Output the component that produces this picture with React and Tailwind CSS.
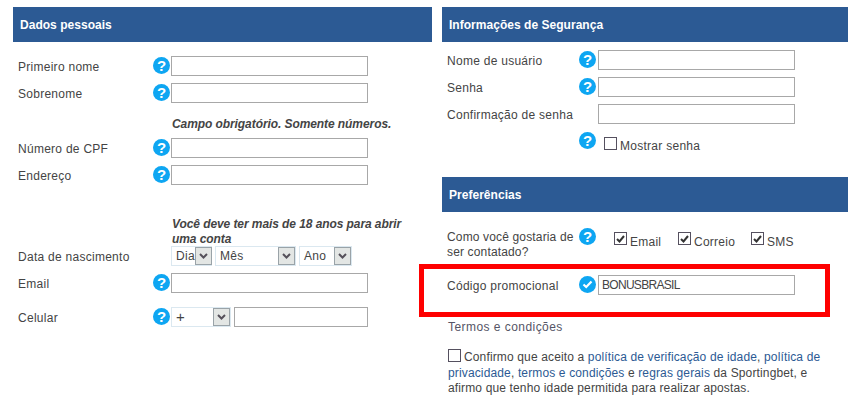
function Help({ check }) {
  return (
    <span className="flex h-[17px] w-[17px] shrink-0 items-center justify-center rounded-full bg-[#0ea6f2] text-[15px] font-bold leading-none text-white">
      {check ? (
        <svg width="11" height="9" viewBox="0 0 11 9" fill="none">
          <path d="M1.5 4.5 L4.2 7 L9.5 1.5" stroke="white" strokeWidth="2.2" />
        </svg>
      ) : (
        "?"
      )}
    </span>
  );
}

function Input({ className = "w-[197px]", value }) {
  return (
    <div className={`h-5 shrink-0 border border-[#a8a8a8] bg-white pl-[3px] text-[12px] leading-[19px] tracking-[-0.7px] text-[#444] ${className}`}>
      {value}
    </div>
  );
}

function Arrow() {
  return (
    <span className="flex h-[18px] w-[17px] shrink-0 items-center justify-center border border-[#9aa3a8] bg-[#e3e6e4]">
      <svg width="9" height="6" viewBox="0 0 9 6" fill="none">
        <path d="M1 1 L4.5 4.5 L8 1" stroke="#55505a" strokeWidth="2" />
      </svg>
    </span>
  );
}

function Select({ label, className, textClass = "" }) {
  return (
    <div className={`flex h-5 shrink-0 items-center justify-between border border-[#dbe8f0] bg-white pl-[4px] text-[12px] tracking-[0.3px] text-[#444] ${className}`}>
      <span className={textClass}>{label}</span>
      <Arrow />
    </div>
  );
}

function Box({ checked, className = "" }) {
  return (
    <span className={`flex h-[13px] w-[13px] shrink-0 items-center justify-center border border-[#55505f] bg-white ${className}`}>
      {checked && (
        <svg width="9" height="8" viewBox="0 0 9 8" fill="none">
          <path d="M1 4 L3.5 6.5 L8 1" stroke="#333" strokeWidth="2" />
        </svg>
      )}
    </span>
  );
}

function Row({ label, labelW, gap, mt, help = true, check, value, children }) {
  return (
    <div className={`flex h-5 items-start ${mt}`}>
      <div className={`shrink-0 pl-[5px] text-[12px] leading-[22px] tracking-[0.27px] text-[#444] ${labelW}`}>{label}</div>
      <div className={`flex shrink-0 pt-px ${gap}`}>
        {help ? <Help check={check} /> : <span className="h-[17px] w-[17px]" />}
      </div>
      {children || <Input value={value} />}
    </div>
  );
}

function Header({ children, className = "" }) {
  return (
    <div className={`flex h-[35px] items-center bg-[#2c5a94] pl-[7px] text-[12px] font-bold tracking-[0.03px] text-white ${className}`}>
      {children}
    </div>
  );
}

function Note({ children, className = "" }) {
  return (
    <div className={`pl-[159px] pr-[20px] text-[12px] font-bold italic leading-[15px] tracking-[-0.08px] text-[#444] ${className}`}>{children}</div>
  );
}

function Link({ children }) {
  return <span className="text-[#2c5a94]">{children}</span>;
}

export default function App() {
  const L = { labelW: "w-[140px]", gap: "mr-px" };
  const R = { labelW: "w-[137px]", gap: "mr-[2px]" };
  return (
    <div className="relative flex h-[405px] w-[856px] overflow-hidden bg-white pl-[13px] pt-[7px] font-['Liberation_Sans',Arial,sans-serif]">
      <section className="w-[419px] shrink-0">
        <Header>Dados pessoais</Header>
        <Row {...L} mt="mt-[14px]" label="Primeiro nome" />
        <Row {...L} mt="mt-[7px]" label="Sobrenome" />
        <Note className="mt-[14px]">Campo obrigatório. Somente números.</Note>
        <Row {...L} mt="mt-[6px]" label="Número de CPF" />
        <Row {...L} mt="mt-[7px]" label="Endereço" />
        <Note className="mt-[32px]">Você deve ter mais de 18 anos para abrir uma conta</Note>
        <Row {...L} mt="-mt-[1px]" help={false} label="Data de nascimento">
          <div className="flex gap-[3px]">
            <Select label="Dia" className="w-[41px]" />
            <Select label="Mês" className="w-[81px]" />
            <Select label="Ano" className="w-[53px]" />
          </div>
        </Row>
        <Row {...L} mt="mt-[7px]" label="Email" />
        <Row {...L} mt="mt-[14px]" label="Celular">
          <div className="flex gap-[3px]">
            <Select label="+" className="w-[60px]" textClass="text-[15px]" />
            <Input className="w-[134px]" />
          </div>
        </Row>
      </section>

      <section className="ml-[10px] w-[406px] shrink-0">
        <Header>Informações de Segurança</Header>
        <Row {...R} mt="mt-[8px]" label="Nome de usuário" />
        <Row {...R} mt="mt-[7px]" label="Senha" />
        <Row {...R} mt="mt-[7px]" help={false} label="Confirmação de senha" />
        <div className="mt-[8px] flex h-[35px] items-start pl-[137px]">
          <Help />
          <Box className="ml-2 mt-[5px]" />
          <span className="ml-[3px] mt-[7px] text-[12px] leading-[15px] tracking-[0.27px] text-[#444]">Mostrar senha</span>
        </div>
        <Header className="mt-[10px]">Preferências</Header>
        <div className="mt-[16px] flex h-[37px] items-start">
          <div className="mt-[2px] w-[137px] shrink-0 pl-[5px] text-[12px] leading-[15px] tracking-[0.15px] text-[#444]">
            Como você gostaria de ser contatado?
          </div>
          <Help />
          <div className="ml-[18px] mt-[4px] flex text-[12px] leading-[15px] tracking-[0.25px] text-[#444]">
            <Box checked /><span className="ml-[3px] mt-[3px] w-[48px]">Email</span>
            <Box checked /><span className="ml-[3px] mt-[3px] w-[57px]">Correio</span>
            <Box checked /><span className="ml-[3px] mt-[3px]">SMS</span>
          </div>
        </div>
        <Row {...R} mt="mt-[10px]" check label="Código promocional" value="BONUSBRASIL" />
        <div className="mt-[25px] pl-[6px] text-[12px] font-normal leading-[15px] tracking-[0.45px] text-[#556]">Termos e condições</div>
        <div className="mt-[14px] pl-[6px] pr-[10px] text-[12px] leading-[15.5px] tracking-[0.14px] text-[#444]">
          <Box className="mr-[3px] inline-flex align-[-1px]" />
          Confirmo que aceito a <Link>política de verificação de idade</Link>, <Link>política de privacidade</Link>, <Link>termos e condições</Link> e <Link>regras gerais</Link> da Sportingbet, e afirmo que tenho idade permitida para realizar apostas.
        </div>
      </section>

      <div className="absolute left-[419px] top-[264px] h-[53px] w-[411px] border-[5px] border-[#fe0000]" />
    </div>
  );
}
